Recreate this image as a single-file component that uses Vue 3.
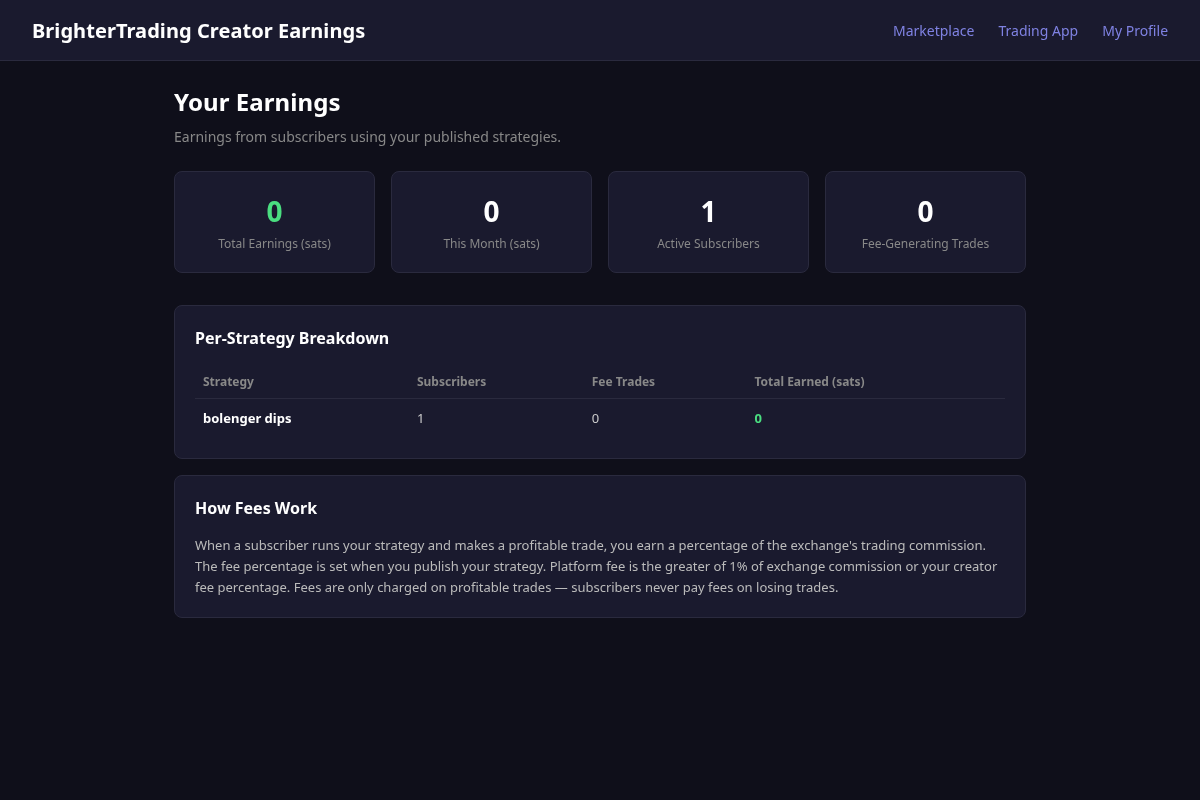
<script setup>
const stats = [
  { value: '0', label: 'Total Earnings (sats)', green: true },
  { value: '0', label: 'This Month (sats)' },
  { value: '1', label: 'Active Subscribers' },
  { value: '0', label: 'Fee-Generating Trades' },
]
const links = ['Marketplace', 'Trading App', 'My Profile']
</script>

<template>
  <div class="page">
    <header class="topbar">
      <span class="brand">BrighterTrading Creator Earnings</span>
      <nav class="nav">
        <a v-for="l in links" :key="l" href="#" class="nav__link">{{ l }}</a>
      </nav>
    </header>

    <main class="main">
      <h1 class="title">Your Earnings</h1>
      <p class="subtitle">Earnings from subscribers using your published strategies.</p>

      <div class="stats">
        <div v-for="s in stats" :key="s.label" class="stat">
          <div class="stat__value" :class="{ green: s.green }">{{ s.value }}</div>
          <div class="stat__label">{{ s.label }}</div>
        </div>
      </div>

      <section class="card card--table">
        <h2 class="card__title">Per-Strategy Breakdown</h2>
        <table class="table">
          <thead>
            <tr>
              <th>Strategy</th>
              <th>Subscribers</th>
              <th>Fee Trades</th>
              <th>Total Earned (sats)</th>
            </tr>
          </thead>
          <tbody>
            <tr>
              <td class="name">bolenger dips</td>
              <td>1</td>
              <td>0</td>
              <td class="earned">0</td>
            </tr>
          </tbody>
        </table>
      </section>

      <section class="card">
        <h2 class="card__title">How Fees Work</h2>
        <p class="card__text">
          When a subscriber runs your strategy and makes a profitable trade, you earn a percentage of the exchange's trading commission. The fee percentage is set when you publish your strategy. Platform fee is the greater of 1% of exchange commission or your creator fee percentage. Fees are only charged on profitable trades — subscribers never pay fees on losing trades.
        </p>
      </section>
    </main>
  </div>
</template>

<style scoped>
.page {
  min-height: 800px;
  background: #0f0f1a;
  color: #fff;
  font-family: "Noto Sans", sans-serif;
}

.topbar {
  display: flex;
  justify-content: space-between;
  align-items: center;
  box-sizing: border-box;
  height: 61px;
  padding: 0 32px;
  background: #1a1a2e;
  border-bottom: 1px solid #2a2a3e;
}

.brand {
  font-size: 20px;
  font-weight: 700;
  letter-spacing: 0.06px;
  will-change: transform;
}

.nav {
  display: flex;
  gap: 24px;
  will-change: transform;
}

.nav__link {
  color: #7f82e2;
  font-size: 14px;
  text-decoration: none;
}

.main {
  width: 852px;
  margin: 0 auto;
  padding-top: 24px;
  will-change: transform;
}

.title {
  margin: -1px 0 6px;
  font-size: 24px;
  font-weight: 700;
  line-height: 36px;
  letter-spacing: 0.08px;
}

.subtitle {
  margin: 0 0 24px;
  font-size: 14px;
  line-height: 21px;
  color: #888;
}

.stats {
  display: grid;
  grid-template-columns: repeat(4, 1fr);
  gap: 16px;
  margin-bottom: 32px;
}

.stat {
  height: 102px;
  box-sizing: border-box;
  padding: 19px 20px;
  text-align: center;
  background: #1a1a2e;
  border: 1px solid #2a2a3e;
  border-radius: 8px;
}

.stat__value {
  margin-bottom: 4px;
  font-size: 28px;
  font-weight: 700;
  line-height: 40px;
}

.green {
  color: #4ade80;
}

.stat__label {
  font-size: 12px;
  line-height: 18px;
  color: #888;
}

.card {
  box-sizing: border-box;
  padding: 20px;
  margin-bottom: 16px;
  background: #1a1a2e;
  border: 1px solid #2a2a3e;
  border-radius: 8px;
}

.card--table {
  padding-bottom: 21px;
}

.card__title {
  margin: 0 0 15px;
  font-size: 16px;
  font-weight: 700;
  line-height: 24px;
}

.table {
  width: 100%;
  border-collapse: collapse;
  font-size: 13px;
}

.table th {
  padding: 8px;
  text-align: left;
  font-size: 12px;
  font-weight: 700;
  color: #888;
  border-bottom: 1px solid #2a2a3e;
}

.table td {
  padding: 10px 8px;
  color: #ccc;
}

.table td.name {
  font-weight: 700;
  color: #fff;
}

.table td.earned {
  font-weight: 700;
  color: #4ade80;
}

.card__text {
  margin: 0;
  font-size: 13px;
  line-height: 1.6;
  color: #bbb;
}
</style>
